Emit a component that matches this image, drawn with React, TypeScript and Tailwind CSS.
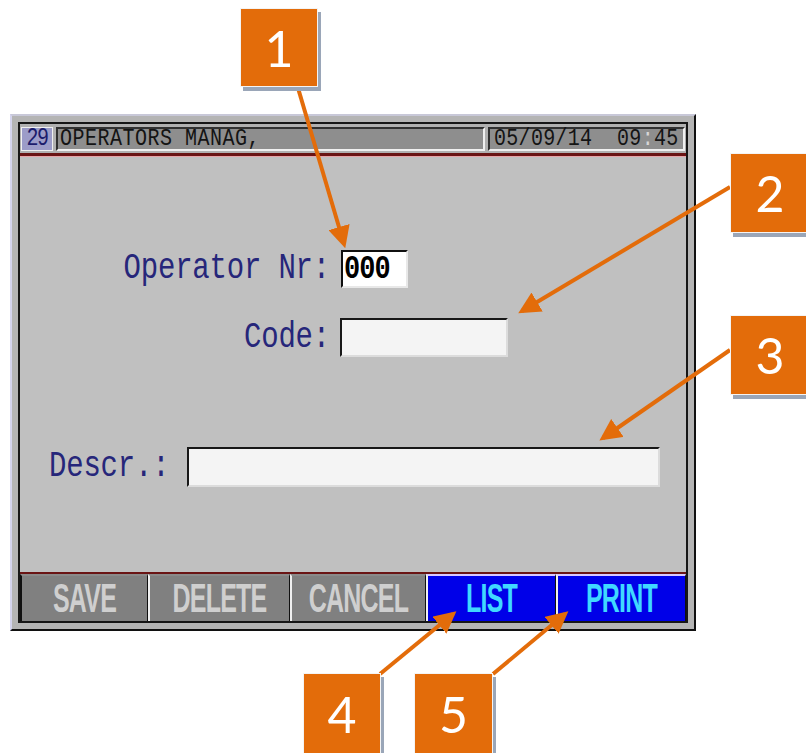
import React from "react";

const mono = { fontFamily: '"Liberation Mono", "DejaVu Sans Mono", monospace' };

function Callout({ n, className }: { n: number; className: string }) {
  return (
    <div
      className={`absolute flex items-center justify-center bg-[#e36c0a] text-white text-[50px] leading-none border border-[#f4f4f4] shadow-[3px_4px_0_#9aa6b8] ${className}`}
      style={{ fontFamily: 'Lato, "Open Sans", sans-serif' }}
    >
      {n}
    </div>
  );
}

function Button({ label, active, first }: { label: string; active?: boolean; first?: boolean }) {
  return (
    <div
      className={`flex h-full items-center justify-center border-l-2 ${first ? "border-l-[#101010]" : "border-l-[#f0f0f0]"} border-r border-r-[#101010] border-t-2 ${
        active ? "bg-[#0000e8] border-t-[#d8c8ff] text-[#40d8ff]" : "bg-[#808080] border-t-[#8a8a8a] text-[#cfcfcf]"
      }`}
    >
      <span
        className="inline-block scale-y-[1.6] text-[25px] font-bold tracking-[-0.8px]"
        style={{ fontFamily: '"Liberation Sans", Arial, sans-serif' }}
      >
        {label}
      </span>
    </div>
  );
}

export default function App() {
  return (
    <div className="relative h-[753px] w-[806px] overflow-hidden bg-white">
      {/* HMI window */}
      <div className="ml-[10px] mt-[114px] flex h-[517px] w-[686px] flex-col border-2 border-b-[#101010] border-l-[#d4d4ee] border-r-[#101010] border-t-[#c8c8d8] bg-[#b4b4b4] p-[6px]">
        <div className="flex flex-1 flex-col border-2 border-[#161616] bg-[#c0c0c0]">
          {/* header */}
          <div className="flex h-[29px] items-center gap-[3px] bg-[#b0b0b0] px-[1px]" style={mono}>
            <div className="flex h-[24px] w-[32px] items-center justify-center border border-[#f0f0f0] bg-[#9c9cc8] text-[20px] text-[#1c1c6c]">
              <span className="inline-block scale-y-[1.25] tracking-[-1.5px]">29</span>
            </div>
            <div className="flex h-[24px] w-[429px] items-center border-2 border-b-[#f0f0f0] border-l-[#303030] border-r-[#f0f0f0] border-t-[#303030] bg-[#8e8e8e] pl-[2px] text-[20px] text-[#141414]">
              <span className="inline-block scale-y-[1.2] tracking-[0.5px]">OPERATORS MANAG,</span>
            </div>
            <div className="flex h-[24px] flex-1 items-center border-2 border-b-[#f0f0f0] border-l-[#303030] border-r-[#f0f0f0] border-t-[#303030] bg-[#8e8e8e] pl-[4px] text-[20px] text-[#141414]">
              <span className="inline-block scale-y-[1.2] whitespace-pre tracking-[0.3px]">
                05/09/14  09<span className="text-[#d8d8d8]">:</span>45
              </span>
            </div>
          </div>
          <div className="h-[3px] bg-[#6a1414]" />
          <div className="h-[1px] bg-[#e8a4a8]" />

          {/* form */}
          <div className="flex flex-1 flex-col pt-[90px]" style={mono}>
            <div className="flex items-center">
              <div className="w-[310px] text-right text-[29px] text-[#26267a]">
                <span className="inline-block scale-y-[1.3] tracking-[-0.2px]">Operator Nr:</span>
              </div>
              <div className="ml-[11px] flex h-[38px] w-[67px] items-center border-2 border-b-[#e8e8e8] border-l-[#101010] border-r-[#e8e8e8] border-t-[#101010] bg-white pl-[1px] text-[27px] font-bold text-black">
                <span className="inline-block scale-y-[1.25] tracking-[-1px]">000</span>
              </div>
            </div>
            <div className="mt-[25px] flex items-center">
              <div className="w-[310px] text-right text-[29px] text-[#26267a]">
                <span className="inline-block scale-y-[1.3] tracking-[-0.2px]">Code:</span>
              </div>
              <div className="ml-[10px] h-[39px] w-[168px] border-2 border-b-[#dcdcdc] border-l-[#181818] border-r-[#dcdcdc] border-t-[#181818] bg-[#f4f4f4]" />
            </div>
            <div className="mt-[86px] flex items-center pl-[29px]">
              <div className="w-[130px] text-[29px] text-[#26267a]">
                <span className="inline-block scale-y-[1.3] tracking-[-0.2px]">Descr.:</span>
              </div>
              <div className="ml-[8px] h-[40px] w-[473px] border-2 border-b-[#dcdcdc] border-l-[#181818] border-r-[#dcdcdc] border-t-[#181818] bg-[#f4f4f4]" />
            </div>
          </div>

          {/* soft keys */}
          <div className="h-[2px] bg-[#6a1414]" />
          <div className="grid h-[47px] grid-cols-[128px_142px_136px_130px_1fr]">
            <Button label="SAVE" first />
            <Button label="DELETE" />
            <Button label="CANCEL" />
            <Button label="LIST" active />
            <Button label="PRINT" active />
          </div>
        </div>
      </div>

      {/* annotations */}
      <svg className="pointer-events-none absolute left-0 top-0" width="806" height="753">
        <defs>
          <marker id="head" viewBox="0 0 10 10" refX="8" refY="5" markerWidth="5.5" markerHeight="5.5" orient="auto">
            <path d="M0 0 L10 5 L0 10 z" fill="#e36c0a" />
          </marker>
        </defs>
        {[
          [298, 88, 344, 244],
          [730, 187, 522, 311],
          [730, 350, 603, 438],
          [380, 674, 453, 614],
          [493, 674, 565, 614],
        ].map(([x1, y1, x2, y2], i) => (
          <line key={i} x1={x1} y1={y1} x2={x2} y2={y2} stroke="#e36c0a" strokeWidth="4" markerEnd="url(#head)" />
        ))}
      </svg>
      <Callout n={1} className="left-[240px] top-[8px] h-[79px] w-[78px]" />
      <Callout n={2} className="left-[730px] top-[153px] h-[80px] w-[80px]" />
      <Callout n={3} className="left-[730px] top-[315px] h-[80px] w-[80px]" />
      <Callout n={4} className="left-[303px] top-[673px] h-[82px] w-[78px]" />
      <Callout n={5} className="left-[414px] top-[673px] h-[82px] w-[79px]" />
    </div>
  );
}
